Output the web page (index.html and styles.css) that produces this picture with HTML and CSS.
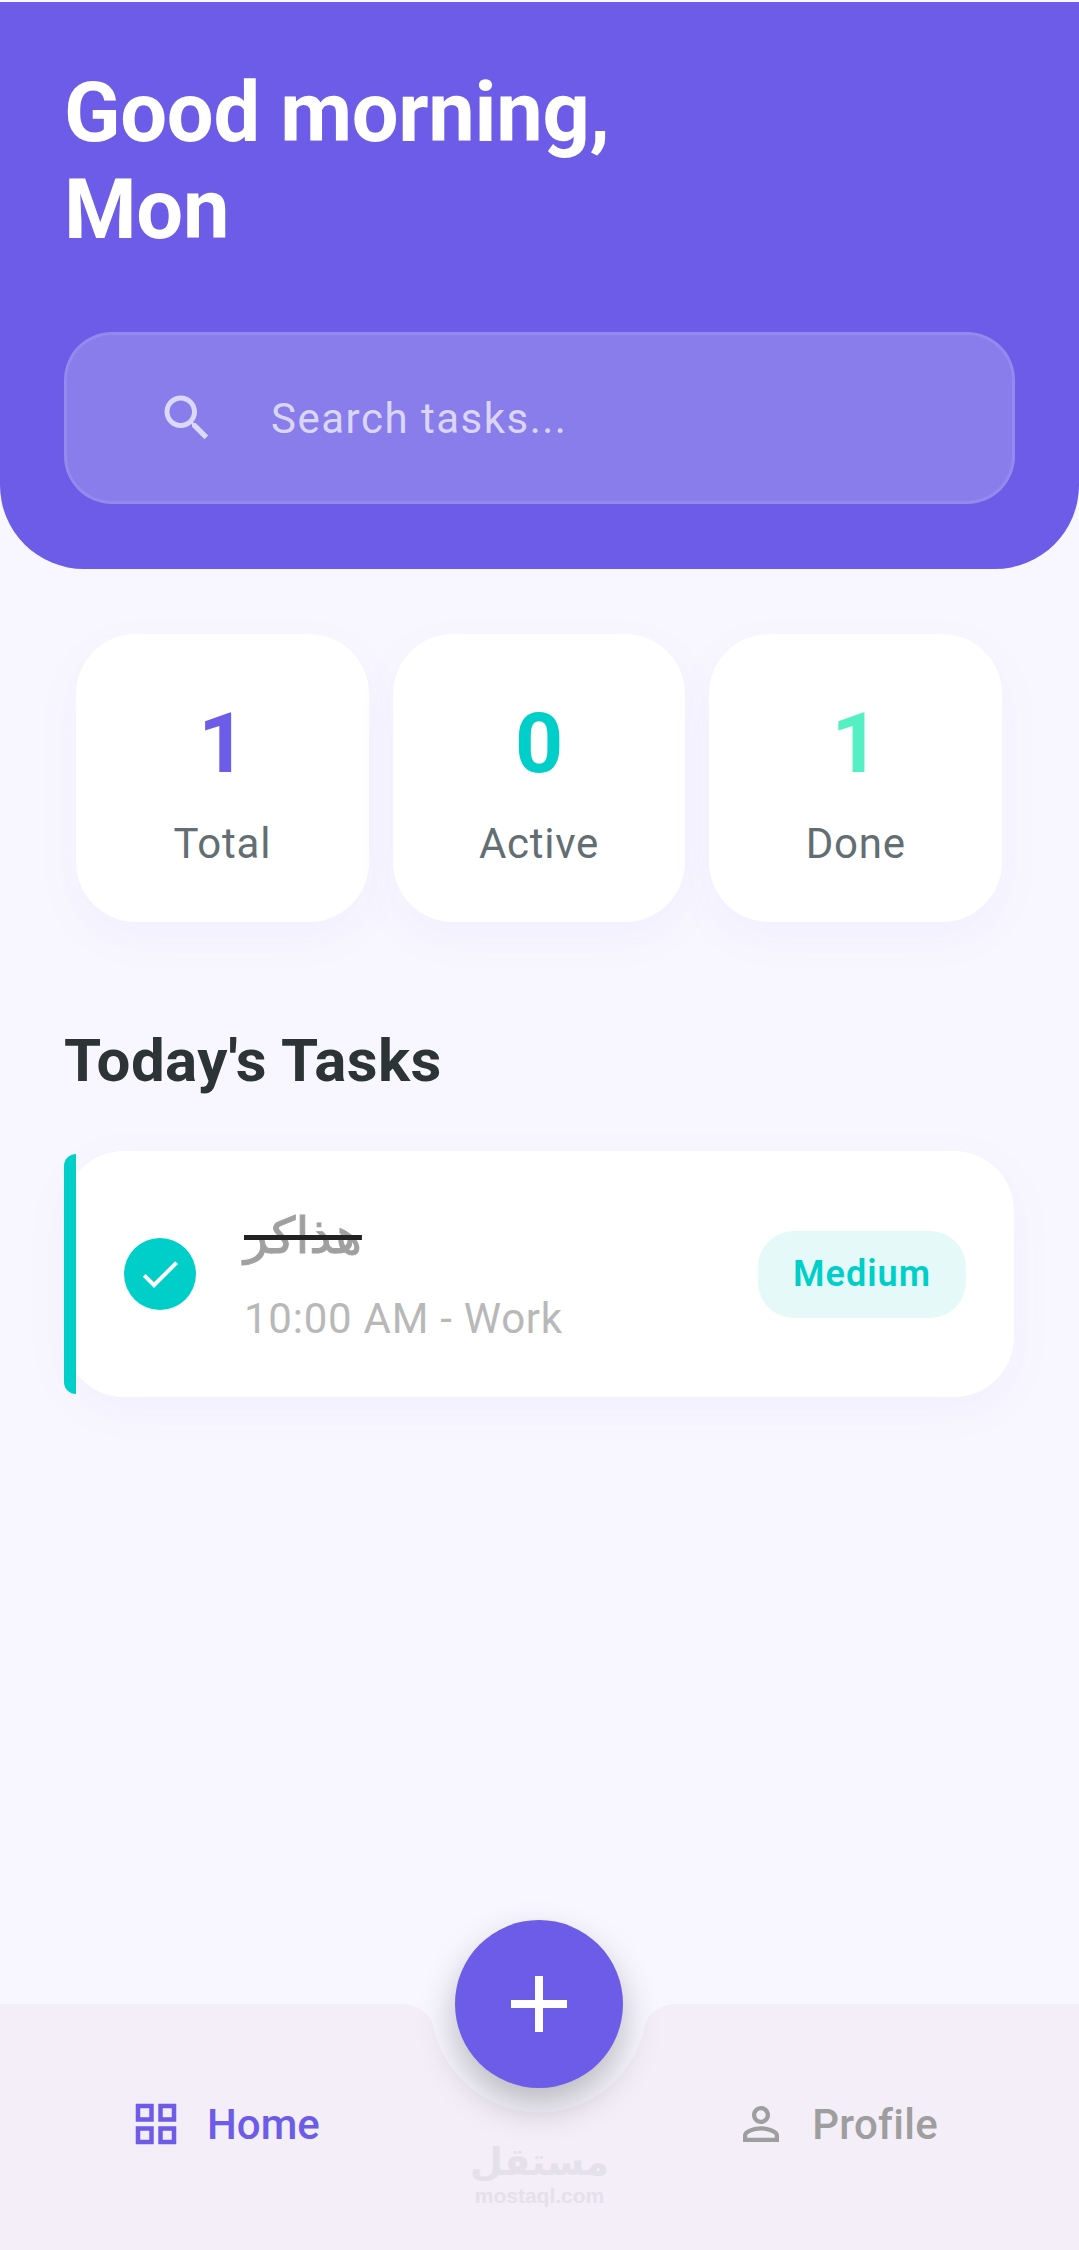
FILE: index.html
```html
<!DOCTYPE html>
<html lang="en">
<head>
    <meta charset="UTF-8">
    <title>Tasks</title>
    <link rel="stylesheet" href="styles.css">
</head>
<body>
    <div class="page">
        <header class="top">
            <h1>Good morning,<br>Mon</h1>
            <div class="search">
                <svg class="search-icon" viewBox="0 0 24 24"><path d="M15.5 14h-.79l-.28-.27C15.41 12.59 16 11.11 16 9.5 16 5.91 13.09 3 9.5 3S3 5.91 3 9.5 5.91 16 9.5 16c1.61 0 3.09-.59 4.23-1.57l.27.28v.79l5 4.99L20.49 19l-4.99-5zm-6 0C7.01 14 5 11.99 5 9.5S7.01 5 9.5 5 14 7.01 14 9.5 11.99 14 9.5 14z"/></svg>
                <span>Search tasks...</span>
            </div>
        </header>

        <main class="content">
            <div class="stats">
                <div class="stat">
                    <div class="num purple">1</div>
                    <div class="label">Total</div>
                </div>
                <div class="stat">
                    <div class="num teal">0</div>
                    <div class="label">Active</div>
                </div>
                <div class="stat">
                    <div class="num mint">1</div>
                    <div class="label">Done</div>
                </div>
            </div>

            <h2>Today's Tasks</h2>

            <div class="task">
                <div class="check">
                    <svg viewBox="0 0 24 24"><path d="M9 16.17L4.83 12l-1.42 1.41L9 19 21 7l-1.41-1.41z"/></svg>
                </div>
                <div class="task-text">
                    <div class="task-title" dir="rtl">هذاكر</div>
                    <div class="task-meta">10:00 AM - Work</div>
                </div>
                <div class="badge">Medium</div>
            </div>
        </main>

        <nav class="bottom">
            <svg class="notch" viewBox="0 0 300 112"><path d="M0 0H11C28 0 40 8 44 21A108 108 0 0 0 256 21C260 8 272 0 289 0H300V-1H0Z"/></svg>
            <a class="tab active">
                <svg viewBox="0 0 24 24"><path d="M3 3v8h8V3H3zm6 6H5V5h4v4zm-6 4v8h8v-8H3zm6 6H5v-4h4v4zm4-16v8h8V3h-8zm6 6h-4V5h4v4zm-6 4v8h8v-8h-8zm6 6h-4v-4h4v4z"/></svg>
                Home
            </a>
            <a class="tab profile">
                <svg viewBox="0 0 24 24"><path d="M12 5.9c1.16 0 2.1.94 2.1 2.1s-.94 2.1-2.1 2.1S9.9 9.16 9.9 8s.94-2.1 2.1-2.1m0 9c2.97 0 6.1 1.46 6.1 2.1v1.1H5.9V17c0-.64 3.13-2.1 6.1-2.1M12 4C9.79 4 8 5.79 8 8s1.79 4 4 4 4-1.79 4-4-1.79-4-4-4zm0 9c-2.67 0-8 1.34-8 4v3h16v-3c0-2.66-5.33-4-8-4z"/></svg>
                Profile
            </a>
            <button class="fab">
                <svg viewBox="0 0 24 24"><path d="M19 13h-6v6h-2v-6H5v-2h6V5h2v6h6v2z"/></svg>
            </button>
            <div class="mark">
                <div class="mark-ar" dir="rtl">مستقل</div>
                <div class="mark-en">mostaql.com</div>
            </div>
        </nav>
    </div>
</body>
</html>
```

FILE: styles.css
```css
* {
    box-sizing: border-box;
}

body {
    margin: 0;
    background: #f8f7ff;
    font-family: Roboto, "DejaVu Sans", sans-serif;
}

.page {
    height: 100vh;
    padding-top: 2px;
    display: flex;
    flex-direction: column;
    overflow: hidden;
}

.top {
    background: #6c5ce7;
    padding: 62px 64px 65px;
    border-radius: 0 0 84px 84px;
}

.top h1 {
    margin: 0 0 74px;
    color: #fff;
    font-size: 83px;
    font-weight: 700;
    line-height: 97px;
    letter-spacing: -0.3px;
}

.search {
    height: 172px;
    padding-left: 90px;
    display: flex;
    align-items: center;
    gap: 54px;
    background: rgba(255, 255, 255, 0.2);
    border: 3px solid rgba(255, 255, 255, 0.1);
    border-radius: 48px;
    color: rgba(255, 255, 255, 0.7);
    font-size: 42px;
    letter-spacing: 1.5px;
}

.search-icon {
    width: 60px;
    height: 60px;
    fill: rgba(255, 255, 255, 0.7);
}

.content {
    flex: 1;
    padding: 65px 65px 0 64px;
}

.stats {
    padding: 0 12px;
    display: flex;
    gap: 24px;
}

.stat {
    flex: 1;
    height: 288px;
    padding-top: 60px;
    background: #fff;
    border-radius: 60px;
    box-shadow: 0 15px 45px rgba(108, 92, 231, 0.05);
    text-align: center;
}

.num {
    font-size: 84px;
    font-weight: 700;
    margin-bottom: 26px;
}

.purple { color: #6c5ce7; }
.teal { color: #00cec9; }
.mint { color: #55efc4; }

.label {
    color: #636e72;
    font-size: 42px;
    letter-spacing: 0.75px;
}

h2 {
    margin: 103px 0 55px;
    color: #2d3436;
    font-size: 60px;
    font-weight: 700;
    letter-spacing: 0.45px;
}

.task {
    position: relative;
    height: 246px;
    padding: 0 48px 0 60px;
    display: flex;
    align-items: center;
    background: #fff;
    border-radius: 60px;
    box-shadow: 0 12px 45px rgba(108, 92, 231, 0.05);
}

/* coloured strip on top of the card edge */
.task::before {
    content: "";
    position: absolute;
    left: 0;
    top: 3px;
    bottom: 3px;
    width: 12px;
    background: #00cec9;
    border-radius: 12px 0 0 12px;
}

.check {
    width: 72px;
    height: 72px;
    border-radius: 50%;
    background: #00cec9;
    display: flex;
    align-items: center;
    justify-content: center;
}

.check svg {
    width: 48px;
    height: 48px;
    fill: #fff;
}

.task-text {
    flex: 1;
    margin: 0 0 4px 48px;
}

.task-title {
    width: fit-content;
    color: #a0a0a0;
    font-family: "DejaVu Sans", sans-serif;
    font-size: 50px;
    line-height: 68px;
    -webkit-text-stroke: 1px #a0a0a0;
    text-decoration: line-through;
    text-decoration-color: #222;
    margin-bottom: 24px;
}

.task-meta {
    color: #b8b8b8;
    font-size: 42px;
    letter-spacing: 0.75px;
}

.badge {
    width: 208px;
    height: 87px;
    background: #e5f9f8;
    border-radius: 36px;
    color: #00cec9;
    font-size: 36px;
    font-weight: 600;
    letter-spacing: 1px;
    display: flex;
    align-items: center;
    justify-content: center;
}

.bottom {
    position: relative;
    height: 246px;
    padding: 93px 141px 0 129px;
    display: flex;
    justify-content: space-between;
    align-items: flex-start;
    background: #f3eef8;
}

.notch {
    position: absolute;
    top: 0;
    left: 389px;
    width: 300px;
    height: 112px;
    fill: #f8f7ff;
    overflow: visible;
}

.tab {
    display: flex;
    align-items: center;
    gap: 24px;
    color: #9e9e9e;
    font-size: 42px;
    font-weight: 500;
}

.tab svg {
    width: 54px;
    height: 54px;
    fill: #9e9e9e;
}

.tab.active {
    color: #6c5ce7;
}

.tab.active svg {
    fill: #6c5ce7;
}

.tab.profile {
    letter-spacing: 0.3px;
}

.fab {
    position: absolute;
    top: -84px;
    left: 455px;
    width: 168px;
    height: 168px;
    padding: 0;
    border: none;
    border-radius: 50%;
    background: #6c5ce7;
    box-shadow: 0 18px 36px rgba(0, 0, 0, 0.25);
    display: flex;
    align-items: center;
    justify-content: center;
}

.fab svg {
    width: 96px;
    height: 96px;
    fill: #fff;
}

.mark {
    position: absolute;
    top: 136px;
    left: 0;
    right: 0;
    color: #e5e1e9;
    text-align: center;
}

.mark-ar {
    font-size: 38px;
    font-weight: 700;
    line-height: 44px;
}

.mark-en {
    font-family: "Liberation Sans", sans-serif;
    font-size: 21px;
    font-weight: 700;
    line-height: 24px;
}
```
